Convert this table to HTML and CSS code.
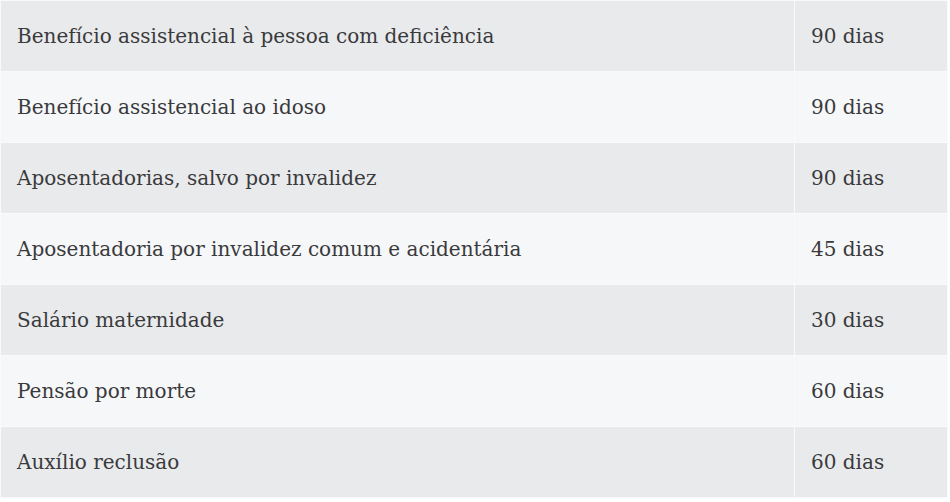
FILE: index.html
```html
<!DOCTYPE html>
<html lang="pt-BR">
<head>
<meta charset="utf-8">
<title>Prazos</title>
<link rel="stylesheet" href="styles.css">
</head>
<body>
<table class="prazos">
  <tbody>
    <tr><td class="beneficio">Benefício assistencial à pessoa com deficiência</td><td class="prazo">90 dias</td></tr>
    <tr><td class="beneficio">Benefício assistencial ao idoso</td><td class="prazo">90 dias</td></tr>
    <tr><td class="beneficio">Aposentadorias, salvo por invalidez</td><td class="prazo">90 dias</td></tr>
    <tr><td class="beneficio">Aposentadoria por invalidez comum e acidentária</td><td class="prazo">45 dias</td></tr>
    <tr><td class="beneficio">Salário maternidade</td><td class="prazo">30 dias</td></tr>
    <tr><td class="beneficio">Pensão por morte</td><td class="prazo">60 dias</td></tr>
    <tr><td class="beneficio">Auxílio reclusão</td><td class="prazo">60 dias</td></tr>
  </tbody>
</table>
</body>
</html>
```
FILE: styles.css
```css
html, body {
  margin: 0;
  padding: 0;
  background: #ffffff;
}
.prazos {
  width: 948px;
  border-collapse: collapse;
  font-family: "DejaVu Serif", serif;
  font-size: 20px;
  color: #3a3a3c;
}
.prazos td {
  height: 71px;
  padding: 0 16px;
  border: 1px solid #f9fafb;
  vertical-align: middle;
  box-sizing: border-box;
}
.prazos tr:nth-child(odd) td {
  background: #e9eaec;
}
.prazos tr:nth-child(even) td {
  background: #f6f7f9;
}
.beneficio {
  width: 794px;
}
.prazo {
  padding-left: 17px;
}
```
